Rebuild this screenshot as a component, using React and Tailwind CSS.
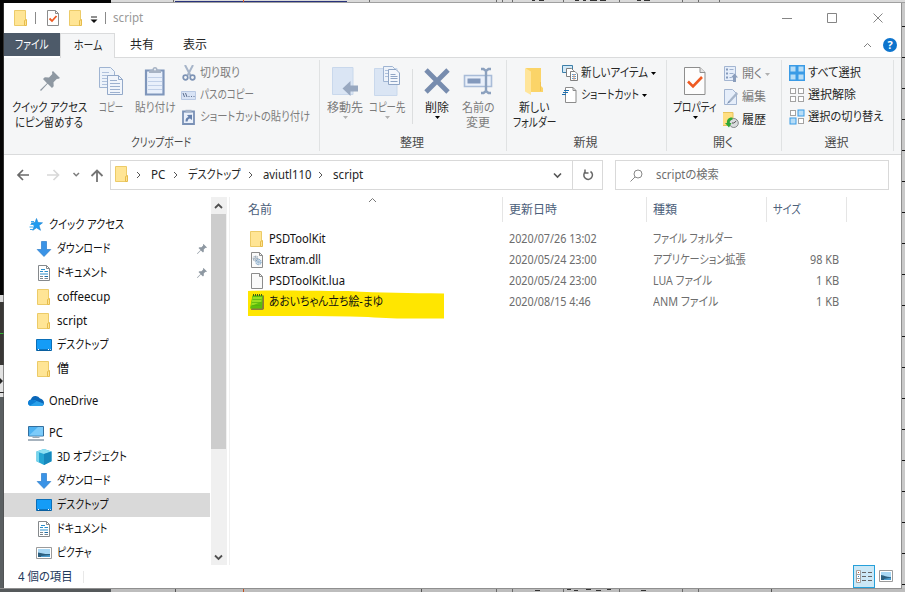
import { useLayoutEffect, useRef, useState } from "react";

// Text squeezed to a given advance width, like the narrow kana of the system UI font
function T({ w, children, className = "" }) {
    const ref = useRef(null);
    const [scale, setScale] = useState(1);

    useLayoutEffect(() => {
        setScale(w / ref.current.offsetWidth);
    }, [w, children]);

    return (
        <span className={`block shrink-0 whitespace-nowrap ${className}`} style={{ width: w }}>
            <span ref={ref} className="inline-block origin-left" style={{ transform: `scaleX(${scale})` }}>
                {children}
            </span>
        </span>
    );
}

const Svg = ({ w = 16, h = 16, className = "", children }) => (
    <svg width={w} height={h} viewBox={`0 0 ${w} ${h}`} fill="none" className={`block shrink-0 ${className}`}>
        {children}
    </svg>
);

const Folder = () => (
    <Svg>
        <path d="M1.5.5h11v15h-11z" fill="#ffe595" stroke="#eccb68" />
        <path d="M11.500 15.500V10.500l2-1v6z" fill="#ffe391" stroke="#e6bc4c" />
    </Svg>
);

const CheckDoc = () => (
    <Svg>
        <path d="M2.500.5h8l3 3v12h-11z" fill="#fff" stroke="#8c8c8c" />
        <path d="M10.500.5v3h3" stroke="#8c8c8c" />
        <path d="M4.500 8.500l2.500 2.500 4.500-5" stroke="#f05a22" strokeWidth="1.800" />
    </Svg>
);

const Star = () => (
    <Svg>
        <path d="M8.500 1.500l1.500 4 4.500.3-3.500 2.700 1.500 4.800-4-2.500-3.700 2.500 1.500-4.500L3 6l4-.5z" fill="#1e9bf0" stroke="#1682d2" strokeWidth=".6" />
        <path d="M3 4.500h3M2.500 7.500h3M1.500 10h4M2 12.500h3" stroke="#3ba7ee" />
    </Svg>
);

const Download = () => (
    <Svg>
        <path d="M5.500.5h5v8h4.300L8 15.500 1.200 8.500h4.300z" fill="#3a93e6" stroke="#2b7dcc" strokeWidth=".7" />
    </Svg>
);

const DocIcon = () => (
    <Svg>
        <path d="M2.500.5h8l3 3v12h-11z" fill="#fff" stroke="#85898c" />
        <path d="M10.500.5v3h3" stroke="#85898c" />
        <path d="M5 4.500h4M4 6.500h3M8.500 6.500h3.500M4 9h8" stroke="#2a8fcc" strokeWidth="1.200" />
        <path d="M4 11.500h3M4 13.500h3M8.500 13.500H12" stroke="#77868f" />
        <path d="M8.500 11h3.500v1H8.500z" fill="#1c6ca3" />
    </Svg>
);

const Desktop = () => (
    <Svg>
        <path d="M.5 2.500h15v11H.5z" fill="#149cf7" stroke="#0b6fb8" />
        <path d="M1 13h14" stroke="#084f86" />
        <path d="M2 12.500h1M12 12.500h1M14 12.500h.7" stroke="#fff" />
    </Svg>
);

const OneDrive = () => (
    <Svg>
        <path d="M3.500 13a3.300 3.300 0 0 1-.6-6.500A5 5 0 0 1 12 5.500c2 .5 4 2 4 4.500 0 2-1.200 3-3 3z" fill="#0a66b8" />
        <path d="M3.500 13C1 13 0 11.500 0 10l6-3 9.500 3.500c.5 1.500-1 2.500-2.500 2.500z" fill="#2aa1ea" />
        <path d="M0 10c0-2 1.500-3.500 4-3.300 2 0 3 1 4.500 1.800L2 12.500C.7 12 0 11 0 10z" fill="#0d7fd6" />
    </Svg>
);

const Computer = () => (
    <Svg>
        <path d="M.5 1.500h15v9.500H.5z" fill="#4db2f2" stroke="#346f9e" />
        <path d="M1 10.500L10 2h5v8.500z" fill="#7ccbfa" />
        <path d="M8 11v1.500M4.500 12.500h7" stroke="#9aa9b4" />
        <path d="M0 15h16" stroke="#8193a3" strokeWidth="1.400" />
    </Svg>
);

const Cube = () => (
    <Svg>
        <path d="M8 0l7.500 2.500v9.700L8 16 .5 12.200V2.500z" fill="#25a5d3" />
        <path d="M8 0l7.500 2.500L8 5 .5 2.500z" fill="#8fe0f2" />
        <path d="M8 5l7.500-2.500v9.700L8 16z" fill="#1788bd" />
        <path d="M.5 2.500L3 3.300v10.200L.5 12.200z" fill="#76d5ec" />
    </Svg>
);

const Picture = () => (
    <Svg>
        <path d="M.5 2.500h15v11H.5z" fill="#fff" stroke="#9b9b9b" />
        <path d="M2 4h12v8H2z" fill="#a9d8f5" />
        <path d="M2 7.500c4 .5 7 2 12 1.500v3H2z" fill="#2c5f7f" />
        <path d="M5 11l9-1v2H5z" fill="#4a9acb" />
    </Svg>
);

const PinShape = ({ className }) => (
    <svg viewBox="0 0 20 20" className={`block shrink-0 ${className}`}>
        <path d="M13 0l7 7-2 1-1-.3-3.500 3.500.2 4L12 17l-4.300-4.200L1 20l-1-1 7-6.800L3 8l1.800-1.700 4.200.2 3.300-3.400L12 1z" fill="#8e98a2" />
    </svg>
);

const Dll = () => (
    <Svg>
        <path d="M2.500.5h8l3 3v12h-11z" fill="#fafafa" stroke="#8c8c8c" />
        <path d="M10.500.5v3h3" stroke="#8c8c8c" />
        <circle cx="6.500" cy="6.500" r="2.200" stroke="#8fa0b0" strokeWidth="1.300" strokeDasharray="1 .5" />
        <circle cx="6.500" cy="6.500" r=".8" stroke="#8fa0b0" />
        <circle cx="9.500" cy="10" r="2.500" stroke="#78a0c4" strokeWidth="1.300" strokeDasharray="1 .5" />
        <circle cx="9.500" cy="10" r=".9" stroke="#78a0c4" />
    </Svg>
);

const Blank = () => (
    <Svg>
        <path d="M2.500.5h8l3 3v12h-11z" fill="#fafafa" stroke="#8c8c8c" />
        <path d="M10.500.5v3h3" stroke="#8c8c8c" />
    </Svg>
);

const Notepad = () => (
    <Svg>
        <path d="M4 1.500h11V15l-1.500 1H2z" fill="#8f7a3a" />
        <path d="M3.500 1.500H14L13 14.500H1z" fill="#5cc00c" />
        <path d="M3.700 3H13l-.6 5C9 8.500 6 11 2 12z" fill="#9ae021" />
        <path d="M3.500 5.500h9M3 8.500h9M2.500 11.500h9" stroke="#54b00d" strokeWidth=".7" />
        <path d="M4 1h10" stroke="#3d6116" strokeWidth="2" strokeDasharray="1 1" />
    </Svg>
);

function Chevron({ dir = "right", className = "" }) {
    const d = {
        right: "M3 1l3 3-3 3",
        down: "M1 2.500l3.500 3.500L8 2.500",
        up: "M1 6l3.500-3.500L8 6",
    }[dir];
    return (
        <svg width="9" height="8" viewBox="0 0 9 8" fill="none" stroke="currentColor" className={`block shrink-0 ${className}`}>
            <path d={d} />
        </svg>
    );
}

const Caret = ({ className = "" }) => (
    <svg width="5" height="3" viewBox="0 0 5 3" className={`block shrink-0 ${className}`}>
        <path d="M0 0h5L2.500 3z" fill="currentColor" />
    </svg>
);

/* ---------- ribbon ---------- */

function Group({ label, w, width, children }) {
    return (
        <div className={`flex flex-col shrink-0 h-[91px] mt-[2px] border-r border-[#e0e2e3] ${width}`}>
            <div className="flex h-[73px]">{children}</div>
            <div className="flex justify-center text-[#4a4a4a] leading-[16px] pt-[3px] pr-[2px]">
                <T w={w}>{label}</T>
            </div>
        </div>
    );
}

function Big({ icon, lines, caret, width, muted }) {
    return (
        <div className={`flex flex-col items-center shrink-0 pt-[5px] ${width} ${muted ? "text-[#7c7c7c]" : "text-[#262626]"}`}>
            <div className="h-[34px] mb-px flex items-center">{icon}</div>
            {lines.map(([text, w]) => (
                <T key={text} w={w} className="leading-[15px] h-[15px]">{text}</T>
            ))}
            {caret && <Caret className={muted ? "text-[#b0b0b0] mt-px" : "text-black mt-px"} />}
        </div>
    );
}

function Small({ icon, text, w, caret, muted }) {
    return (
        <div className={`flex items-center h-[22px] gap-[3px] ${muted ? "text-[#7c7c7c]" : "text-[#262626]"}`}>
            {icon}
            <T w={w} className="leading-[20px]">{text}</T>
            {caret && <Caret className={muted ? "text-[#b0b0b0]" : "text-black"} />}
        </div>
    );
}

const CopyIcon = () => (
    <Svg w={26} h={30}>
        <path d="M1.500.5h11l4 4v16h-15z" fill="#edf3fa" stroke="#9fb4d2" />
        <path d="M4 5.500h7M4 8.500h10M4 11.500h10M4 14.500h10M4 17.500h10" stroke="#afc1dc" />
        <path d="M9.500 8.500h11l4 4v15h-15z" fill="#f1f5fb" stroke="#93a9c9" />
        <path d="M20.500 8.500v4h4" stroke="#93a9c9" />
        <path d="M12 13.500h7M12 16.500h10M12 19.500h10M12 22.500h10M12 25.500h10" stroke="#9db1cf" />
    </Svg>
);

const PasteIcon = () => (
    <Svg w={22} h={32}>
        <path d="M2 4.500h17.500v24H2z" fill="#e9f0fb" stroke="#7f96bb" strokeWidth="2.200" />
        <path d="M4 11.500h14M4 15.500h14M4 19.500h14M4 23.500h14" stroke="#c1d0e8" />
        <path d="M5 7V4.500l3.500-1a2.500 2.500 0 0 1 5 0l3.500 1V7z" fill="#a7b3c4" />
        <circle cx="11" cy="3.500" r="1" fill="#edf2f8" />
    </Svg>
);

const MoveIcon = () => (
    <Svg w={28} h={30}>
        <path d="M1.500.5h20.500v27H1.500z" fill="#dae5f4" stroke="#c9d8ec" />
        <path d="M11.500 21.500l8-7.500v4.500H27v6h-7.500V29z" fill="#98a8c0" />
    </Svg>
);

const CopyToIcon = () => (
    <Svg w={28} h={32}>
        <path d="M1.500 2.500h22.500v27H1.500z" fill="#dae5f4" stroke="#c9d8ec" />
        <path d="M10.500.5h9l2 2v13h-11z" fill="#eef3fa" stroke="#9fb4d2" />
        <path d="M12 4.500h6M12 7.500h6M12 10.500h6" stroke="#afc1dc" />
        <path d="M15.500 3.500h7.500l3.500 3.500v11.500h-11z" fill="#f3f7fc" stroke="#8fa5c5" />
        <path d="M17.500 8.500h5M17.500 10.500h7M17.500 12.500h7M17.500 15.500h7" stroke="#8fa5c5" />
    </Svg>
);

const DeleteIcon = () => (
    <Svg w={28} h={30}>
        <path d="M3 3L25 25M25 3L3 25" stroke="#778cae" strokeWidth="4.800" />
    </Svg>
);

const RenameIcon = () => (
    <Svg w={30} h={30}>
        <path d="M1.500 8.500h27v11h-27z" fill="#eaf0fa" stroke="#a9bcd8" strokeWidth="1.600" />
        <path d="M4.500 11.500h13v5h-13z" fill="#8399bc" />
        <path d="M18 2h2.500L23 4l2.500-2H28M18 26h2.500l2.500-2 2.500 2H28M23 3.500v21" stroke="#8ca1be" strokeWidth="2.400" />
    </Svg>
);

const NewFolderIcon = () => (
    <Svg w={22} h={30}>
        <path d="M3 1h15v18l2 2v4H8z" fill="#fbd468" />
        <path d="M2 1l6 3.500V28l-6-3.500z" fill="#ffe59a" />
        <path d="M17.500 15v9" stroke="#f2c453" />
    </Svg>
);

const PropsIcon = () => (
    <Svg w={22} h={30}>
        <path d="M.5.5h15.500l5 5v22H.5z" fill="#fdfdfd" stroke="#8e8e8e" />
        <path d="M16 .5v5h5" fill="#e4e4e4" stroke="#8e8e8e" />
        <path d="M4 14.500l5 5 9-9.500" stroke="#ef5a22" strokeWidth="2.600" />
    </Svg>
);

const CutIcon = () => (
    <Svg>
        <path d="M4 0l5.500 10.500M12 0L6.500 10.500" stroke="#a7b5c9" strokeWidth="2" />
        <circle cx="4.500" cy="12.500" r="2.300" stroke="#7d93b5" strokeWidth="1.700" />
        <circle cx="11.500" cy="12.500" r="2.300" stroke="#7d93b5" strokeWidth="1.700" />
    </Svg>
);

const PathIcon = () => (
    <Svg>
        <path d="M.5 4.500h14v8H.5z" fill="#d8e3f5" stroke="#b9c9e3" />
        <path d="M2 6l1.500 4M4.500 6L6 10M7.500 9.500h1M10 9.500h1M12.500 9.500h1" stroke="#5d6f8f" />
    </Svg>
);

const PasteLinkIcon = () => (
    <Svg>
        <path d="M2 2.500h11v12.500H2z" fill="#eaf0fa" stroke="#7a91b6" strokeWidth="1.800" />
        <path d="M4.500.8h6v2.700h-6z" fill="#a5b3c8" />
        <path d="M4.500 12.500c0-3 1-4 3-4.500L6 6l5-.3V11L9 9.500c-1.500.3-2 1-2.500 3z" fill="#6681ad" />
    </Svg>
);

const NewItemIcon = () => (
    <Svg>
        <path d="M.5.5h10v7H.5z" fill="#d3e9f7" stroke="#3d7fa9" />
        <path d="M4.500 3.500h5l2 2v6h-7z" fill="#fff" stroke="#808080" />
        <path d="M8.500 6.500h4.500l2.500 2.500v6.500h-7z" fill="#fff" stroke="#808080" />
        <path d="M10 9.500h4M10 11.500h4M10 13.500h4" stroke="#5aa2d6" />
        <path d="M12 9v6" stroke="#ec9b72" />
    </Svg>
);

const ShortcutIcon = () => (
    <Svg>
        <path d="M3.500.5H11l3 3v12H3.500z" fill="#fff" stroke="#8c8c8c" />
        <path d="M11 .5v3h3" stroke="#8c8c8c" />
        <path d="M2 3.500h5M1 5.500h5M0 7.500h4" stroke="#1b6fb0" strokeWidth="1.200" />
    </Svg>
);

const OpenIcon = () => (
    <Svg>
        <path d="M1.500.5h11v14h-11z" fill="#e6eefa" stroke="#a3b5d1" />
        <path d="M3 2.500h2v2H3zM3 6.500h2v2H3zM3 10.500h2v2H3z" fill="#859bbd" />
        <path d="M6.500 3.500h4M6.500 7.500h4M6.500 11.500h2" stroke="#9db0cd" />
        <path d="M11.500 7.500l3.500 4h-2V16h-3v-4.500H8z" fill="#8b9ebc" />
    </Svg>
);

const EditIcon = () => (
    <Svg>
        <path d="M1.500.5h8l4 4v11h-12z" fill="#e6eefa" stroke="#a3b5d1" />
        <path d="M13.500 3L6 11.500l-2 3 3.500-1.500L15 5z" fill="#a6b5ca" />
        <path d="M4 15l2-3 1 1z" fill="#7088ad" />
    </Svg>
);

const HistoryIcon = () => (
    <Svg>
        <path d="M-.5.500h10.500v13H-.5z" fill="#ffde81" stroke="#e8c35b" />
        <circle cx="10.800" cy="11" r="4.500" fill="#d9dcdd" stroke="#85898b" />
        <path d="M10.800 11l2.500-2M10.800 11H9" stroke="#555" />
        <path d="M9.500 5.500C5.500 5 3.500 8 4 11H2l4 4.500 2.500-4.500h-2c0-2 .8-3 3-3.500z" fill="#2ea836" />
    </Svg>
);

function TilesIcon({ on }) {
    const cells = [[1, 1], [9, 1], [1, 9], [9, 9]];
    return (
        <Svg>
            {on === "all" && <path d="M0 0h16v16H0z" fill="#3b9be6" />}
            {cells.map(([x, y], i) => {
                const active = on === "all" || (on === "some" && (i === 1 || i === 2));
                return (
                    <rect
                        key={i}
                        x={x + (active ? 0 : 0.5)}
                        y={y + (active ? 0 : 0.5)}
                        width={active ? 6 : 5}
                        height={active ? 6 : 5}
                        fill={active ? "#b7ddf7" : "#fff"}
                        stroke={active ? "#3b9be6" : "#a3a3a3"}
                    />
                );
            })}
        </Svg>
    );
}

function Ribbon() {
    return (
        <div className="flex h-[97px] shrink-0 bg-[#f5f6f7] border-b border-[#dadbdc]">
            <Group label="クリップボード" w={60} width="w-[316px]">
                <Big width="w-[82px] ml-[4px]" icon={<PinShape className="w-[20px] h-[20px] -mt-[2px] ml-px" />} lines={[["クイック アクセス", 75], ["にピン留めする", 68]]} />
                <Big width="w-[39px] ml-px" muted icon={<CopyIcon />} lines={[["コピー", 24]]} />
                <Big width="w-[48px] ml-px" muted icon={<PasteIcon />} lines={[["貼り付け", 41]]} />
                <div className="pt-[2px] ml-[2px]">
                    <Small muted icon={<CutIcon />} text="切り取り" w={40} />
                    <Small muted icon={<PathIcon />} text="パスのコピー" w={54} />
                    <Small muted icon={<PasteLinkIcon />} text="ショートカットの貼り付け" w={110} />
                </div>
            </Group>
            <Group label="整理" w={24} width="w-[187px]">
                <Big width="w-[40px] ml-[5px]" muted caret icon={<MoveIcon />} lines={[["移動先", 36]]} />
                <Big width="w-[44px]" muted caret icon={<CopyToIcon />} lines={[["コピー先", 36]]} />
                <div className="w-px h-[55px] mt-[9px] ml-[3px] bg-[#dcdedf]" />
                <Big width="w-[40px] ml-[4px]" caret icon={<DeleteIcon />} lines={[["削除", 24]]} />
                <Big width="w-[44px] -ml-px" muted icon={<RenameIcon />} lines={[["名前の", 33], ["変更", 24]]} />
            </Group>
            <Group label="新規" w={24} width="w-[160px]">
                <Big width="w-[50px] ml-[2px]" icon={<NewFolderIcon />} lines={[["新しい", 30], ["フォルダー", 43]]} />
                <div className="pt-[2px] ml-[3px]">
                    <Small caret icon={<NewItemIcon />} text="新しいアイテム" w={67} />
                    <Small caret icon={<ShortcutIcon />} text="ショートカット" w={58} />
                </div>
            </Group>
            <Group label="開く" w={20} width="w-[115px]">
                <Big width="w-[48px] ml-[4px]" caret icon={<PropsIcon />} lines={[["プロパティ", 44]]} />
                <div className="pt-[3px] ml-[4px] flex flex-col gap-px">
                    <Small muted caret icon={<OpenIcon />} text="開く" w={20} />
                    <Small muted icon={<EditIcon />} text="編集" w={24} />
                    <Small icon={<HistoryIcon />} text="履歴" w={24} />
                </div>
            </Group>
            <Group label="選択" w={24} width="w-[112px]">
                <div className="pt-[2px] ml-[7px]">
                    <Small icon={<TilesIcon on="all" />} text="すべて選択" w={53} />
                    <Small icon={<TilesIcon />} text="選択解除" w={48} />
                    <Small icon={<TilesIcon on="some" />} text="選択の切り替え" w={75} />
                </div>
            </Group>
        </div>
    );
}

/* ---------- title, tabs, address ---------- */

function TitleBar() {
    return (
        <div className="flex items-center h-[30px] shrink-0">
            <div className="ml-[9px] -mt-px"><Folder /></div>
            <div className="w-px h-[12px] bg-[#8a8a8a] ml-[6px]" />
            <div className="ml-[9px]"><CheckDoc /></div>
            <div className="ml-[7px]"><Folder /></div>
            <Svg w={8} h={8} className="ml-[6px] mt-[3px]">
                <path d="M1 1h6" stroke="#222" />
                <path d="M.5 3.500h7L4 7z" fill="#111" />
            </Svg>
            <div className="w-px h-[12px] bg-[#8a8a8a] ml-[7px]" />
            <T w={30} className="ml-[7px] text-[#999]">script</T>
            <Svg w={101} h={11} className="ml-auto mr-[18px]">
                <path d="M0 5.500h10M45.500.5h9v9h-9zM91.500.5l9 9M100.500.5l-9 9" stroke="#858585" />
            </Svg>
        </div>
    );
}

function Tabs() {
    return (
        <div className="flex h-[25px] shrink-0 text-[#262626]">
            <div className="w-[56px] h-[23px] bg-[#4d5a69] text-white flex items-center justify-center">
                <T w={34}>ファイル</T>
            </div>
            <div className="w-[55px] h-[25px] bg-[#f5f6f7] border-t border-x border-[#dadbdc] flex items-center justify-center">
                <T w={28}>ホーム</T>
            </div>
            <div className="flex-1 flex items-center border-b border-[#dadbdc]">
                <T w={24} className="ml-[15px]">共有</T>
                <T w={24} className="ml-[29px]">表示</T>
                <Chevron dir="up" className="ml-auto text-[#808080]" />
                <svg width="14" height="14" viewBox="0 0 14 14" className="block ml-[11px] mr-[4px]">
                    <circle cx="7" cy="7" r="7" fill="#0d74cd" />
                    <text x="7" y="11" textAnchor="middle" fontSize="11" fontWeight="700" fontFamily="Open Sans" fill="#fff">?</text>
                </svg>
            </div>
        </div>
    );
}

function AddressBar() {
    const crumbs = [["PC", 14.5], ["デスクトップ", 53], ["aviutl110", 48], ["script", 30]];
    return (
        <div className="flex items-center h-[42px] shrink-0 pb-[2px] pl-[12px] text-[#262626]">
            <Svg w={88} h={14}>
                <path d="M13 7H2M7 2L2 7l5 5" stroke="#6a6a6a" strokeWidth="1.700" />
                <path d="M31 7h11M37.500 2l5 5-5 5" stroke="#d8d8d8" strokeWidth="1.700" />
                <path d="M57.500 5l2.700 2.700L63 5" stroke="#7c7c7c" strokeWidth="1.500" />
                <path d="M81 14V3M75.500 8L81 2.500 86.500 8" stroke="#747474" strokeWidth="1.800" />
            </Svg>
            <div className="flex items-center w-[493px] h-[30px] border border-[#d9d9d9] ml-[6px]">
                <div className="ml-[3px] -mt-[3px]"><Folder /></div>
                {crumbs.map(([name, w]) => (
                    <div key={name} className="flex items-center">
                        <Chevron className="text-[#555] ml-[4px] mr-[8px]" />
                        <T w={w} className="mr-px">{name}</T>
                    </div>
                ))}
                <Chevron dir="down" className="ml-auto mr-[10px] text-[#555] stroke-[1.600]" />
                <div className="w-[30px] h-full border-l border-[#d9d9d9] flex items-center justify-center">
                    <Svg w={12} h={12}>
                        <path d="M8.500 2.500A4.300 4.300 0 1 1 3.500 2.700M3 .5V4h3.500" stroke="#666" strokeWidth="1.500" />
                    </Svg>
                </div>
            </div>
            <div className="flex items-center w-[274px] h-[30px] border border-[#d9d9d9] ml-[12px] text-[#6d6d6d]">
                <Svg w={13} h={13} className="ml-[14px]">
                    <circle cx="8" cy="5" r="4" stroke="#888" />
                    <path d="M5 8l-4.500 4.500" stroke="#888" />
                </Svg>
                <T w={63} className="ml-[13px]">scriptの検索</T>
            </div>
        </div>
    );
}

/* ---------- body ---------- */

const quick = [
    { icon: <Download />, name: "ダウンロード", w: 53, pin: true },
    { icon: <DocIcon />, name: "ドキュメント", w: 50, pin: true },
    { icon: <Folder />, name: "coffeecup", w: 53 },
    { icon: <Folder />, name: "script", w: 30 },
    { icon: <Desktop />, name: "デスクトップ", w: 52 },
    { icon: <Folder />, name: "僧", w: 12 },
];

const pc = [
    { icon: <Cube />, name: "3D オブジェクト", w: 70 },
    { icon: <Download />, name: "ダウンロード", w: 53 },
    { icon: <Desktop />, name: "デスクトップ", w: 52, selected: true },
    { icon: <DocIcon />, name: "ドキュメント", w: 50 },
    { icon: <Picture />, name: "ピクチャ", w: 35 },
];

function TreeItem({ icon, name, w, pin, selected, root }) {
    return (
        <div className={`flex items-center h-[24px] shrink-0 ${root ? "pl-[24px]" : "pl-[32px]"} ${selected ? "bg-[#d9d9d9]" : ""}`}>
            {icon}
            <T w={w} className="ml-[5px]">{name}</T>
            {pin && <PinShape className="w-[10px] h-[10px] ml-auto mr-[3px]" />}
        </div>
    );
}

function Sidebar() {
    return (
        <div className="flex shrink-0 h-[368px]">
            <div className="flex flex-col w-[206px] pt-[16px] text-[#111]">
                <TreeItem root icon={<Star />} name="クイック アクセス" w={75} />
                {quick.map((item) => <TreeItem key={item.name} {...item} />)}
                <div className="my-2">
                    <TreeItem root icon={<OneDrive />} name="OneDrive" w={49} />
                </div>
                <TreeItem root icon={<Computer />} name="PC" w={14} />
                {pc.map((item) => <TreeItem key={item.name} {...item} />)}
            </div>
            <div className="flex flex-col items-center w-[16px] pr-px ml-px bg-[#f0f0f0]">
                <div className="h-[17px] flex items-center"><Chevron dir="up" className="text-[#505050] stroke-[1.800]" /></div>
                <div className="w-[15px] h-[235px] bg-[#cdcdcd]" />
                <div className="h-[17px] mt-auto flex items-center"><Chevron dir="down" className="text-[#505050] stroke-[1.800]" /></div>
            </div>
            <div className="w-px ml-[2px] bg-[#f0f0f0]" />
        </div>
    );
}

const files = [
    { icon: <Folder />, name: "PSDToolKit", nw: 57, date: "2020/07/26 13:02", dw: 88, type: "ファイル フォルダー", tw: 80 },
    { icon: <Dll />, name: "Extram.dll", nw: 52, date: "2020/05/24 23:00", dw: 88, type: "アプリケーション拡張", tw: 93, size: "98 KB", sw: 29 },
    { icon: <Blank />, name: "PSDToolKit.lua", nw: 76, date: "2020/05/24 23:00", dw: 88, type: "LUA ファイル", tw: 59, size: "1 KB", sw: 23 },
    { icon: <Notepad />, name: "あおいちゃん立ち絵-まゆ", nw: 114, date: "2020/08/15 4:46", dw: 82, type: "ANM ファイル", tw: 65, size: "1 KB", sw: 23, marked: true },
];

function FileList() {
    return (
        <div className="flex-1 pl-[18px]">
            <div className="flex h-[25px] text-[#4c607a]">
                <div className="flex w-[255px] border-r border-[#e5e5e5] items-center">
                    <T w={24}>名前</T>
                    <Chevron dir="up" className="ml-[96px] mb-[20px] text-[#777]" />
                </div>
                <div className="flex w-[144px] border-r border-[#e5e5e5] items-center pl-[6px]"><T w={48}>更新日時</T></div>
                <div className="flex w-[120px] border-r border-[#e5e5e5] items-center pl-[6px]"><T w={24}>種類</T></div>
                <div className="flex w-[80px] border-r border-[#e5e5e5] items-center pl-[6px]"><T w={28}>サイズ</T></div>
            </div>
            <div className="pt-[6px]">
                {files.map((f) => (
                    <div key={f.name} className="relative flex items-center h-[21px] text-[#6d6d6d]">
                        {f.marked && (
                            <svg width="197" height="30" viewBox="0 0 197 30" className="absolute -left-px -top-px">
                                <path d="M1 1c30-1 60 0 100 0 35 2 60 2 96 2.500V28.500c-35 0-50 .5-76-1.500-40-1.500-80-1-120-1z" fill="#ffe600" />
                            </svg>
                        )}
                        <div className="relative flex items-center w-[261px] pl-px text-[#111]">
                            {f.icon}
                            <T w={f.nw} className="ml-[4px]">{f.name}</T>
                        </div>
                        <div className="w-[144px]"><T w={f.dw}>{f.date}</T></div>
                        <div className="w-[120px]"><T w={f.tw}>{f.type}</T></div>
                        <div className="flex justify-end w-[66px]">{f.size && <T w={f.sw}>{f.size}</T>}</div>
                    </div>
                ))}
            </div>
        </div>
    );
}

function StatusBar() {
    return (
        <div className="flex items-center h-[23px] shrink-0 text-[#1e395b]">
            <T w={55} className="ml-[14px]">4 個の項目</T>
            <div className="w-px h-[12px] bg-[#e8e8e8] ml-[10px]" />
            <div className="flex items-center justify-center w-[22px] h-[23px] ml-auto bg-[#cce8f6] border border-[#26a0da]">
                <Svg w={16} h={14}>
                    <path d="M.5.5h4v12h-4zM.5 4.500h4M.5 8.500h4" fill="#fff" stroke="#a0a0a0" />
                    <path d="M2 2.500h1M2 10.500h1" stroke="#d2552c" />
                    <path d="M2 6.500h1" stroke="#2c84d2" />
                    <path d="M6 2.500h4M12 2.500h4M6 6.500h4M12 6.500h4M6 10.500h4M12 10.500h4" stroke="#666" />
                </Svg>
            </div>
            <Svg w={14} h={12} className="ml-[4px] mr-[8px] -mt-[2px]">
                <path d="M.5.500h13v11H.5z" fill="#fff" stroke="#9b9b9b" />
                <path d="M2 2h10v8H2z" fill="#a9d8f5" />
                <path d="M2 5c4 .5 6 2.500 10 2v3H2z" fill="#2c5f7f" />
                <path d="M5 9l7-1.500V10H5z" fill="#4a9acb" />
            </Svg>
        </div>
    );
}

/* ---------- desktop showing around the window ---------- */

const topMarks = [173, 369, 496, 502, 512, 563, 619, 682, 698, 719];
const bottomMarks = [496, 512, 563, 619, 682, 698];

export default function App() {
    return (
        <div className="flex flex-col w-[905px] h-[592px] overflow-hidden bg-[#c6c6c6] text-[12px] leading-[16px] font-['Noto_Sans','Noto_Sans_CJK_JP',sans-serif] [font-feature-settings:'palt']">
            <svg width="905" height="3" viewBox="0 0 905 3" className="block shrink-0">
                <path d="M0 0h905v3H0z" fill="#dadada" />
                <path d="M0 0h111v3H0z" fill="#050505" />
                <path d="M175 1.500h172" stroke="#28327c" />
                {topMarks.map((x) => (
                    <path key={x} d={`M${x + 0.5} 0v3`} stroke="#6a6a6a" />
                ))}
                <path d="M243.500 0v3" stroke="#d9582b" />
                <path d="M532 .5h3M539 .5h5M575 .5h4M583 .5h3M590 .5h7M600 .5h6M637 .5h4M644 .5h6" stroke="#333" />
                <path d="M111 2.500h794" stroke="#a0a0a0" />
            </svg>
            <div className="flex h-[585px] shrink-0">
                <svg width="4" height="585" viewBox="0 0 4 585" className="block shrink-0">
                    <path d="M0 0h4v292H0z" fill="#050505" />
                    <path d="M0 292h4v7H0z" fill="#d8d8d8" />
                    <path d="M0 299h4v63H0z" fill="#393735" />
                    <path d="M0 330.500h4" stroke="#35b035" />
                    <path d="M0 362h4v32H0z" fill="#e2e2e2" />
                    <path d="M0 375l3 3-3 3zM0 389h4v1H0z" fill="#222" />
                    <path d="M0 394h4v191H0z" fill="#5a5f61" />
                    <path d="M3.500 0v585" stroke="#4c4c4c" strokeOpacity=".6" />
                </svg>
                <div className="flex flex-col w-[897px] bg-white">
                    <TitleBar />
                    <Tabs />
                    <Ribbon />
                    <AddressBar />
                    <div className="flex h-[368px] shrink-0">
                        <Sidebar />
                        <FileList />
                    </div>
                    <StatusBar />
                </div>
                <svg width="4" height="585" viewBox="0 0 4 585" className="block shrink-0">
                    <path d="M0 0h4v585H0z" fill="#c9c9c9" />
                    <path d="M.5 0v585" stroke="#8f8f8f" />
                    {Array.from({ length: 19 }, (_, i) => (
                        <path key={i} d={`M1 ${23.5 + i * 31}h3`} stroke="#151515" />
                    ))}
                </svg>
            </div>
            <svg width="905" height="4" viewBox="0 0 905 4" className="block shrink-0">
                <path d="M0 0h905v4H0z" fill="#bdbdbd" />
                <path d="M0 0h111v4H0z" fill="#55595b" />
                <path d="M0 .5h902" stroke="#8f8f8f" />
                {bottomMarks.map((x) => (
                    <path key={x} d={`M${x + 0.5} 1v3`} stroke="#6a6a6a" />
                ))}
                <path d="M175.500 1v3M771.500 1v3M421.500 1v3" stroke="#555" />
                <path d="M243.500 1v3" stroke="#c0501f" />
                <path d="M535 2.500h5M567 1.500h4M574 2.500h4M586 1.500h5M596 2.500h5M607 1.500h4M641 2.500h5" stroke="#333" />
            </svg>
        </div>
    );
}
